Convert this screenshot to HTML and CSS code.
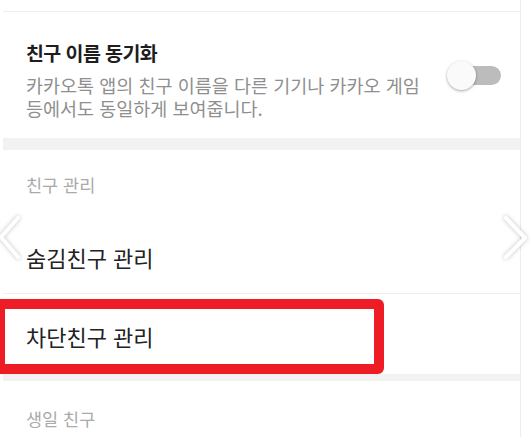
FILE: index.html
```html
<!DOCTYPE html>
<html lang="ko">
<head>
<meta charset="utf-8">
<link rel="stylesheet" href="styles.css">
</head>
<body>
<div class="page">
  <div class="top-gap"></div>
  <section class="sync">
    <div class="sync-text">
      <div class="title">친구 이름 동기화</div>
      <div class="desc">
        <div class="desc-line">카카오톡 앱의 친구 이름을 다른 기기나 카카오 게임</div>
        <div class="desc-line">등에서도 동일하게 보여줍니다.</div>
      </div>
    </div>
    <div class="toggle"><span class="knob"></span><span class="track"></span></div>
  </section>
  <div class="band"></div>
  <section class="group">
    <div class="group-head">친구 관리</div>
    <div class="item item-first">숨김친구 관리</div>
    <div class="item">차단친구 관리</div>
  </section>
  <div class="band band-thin"></div>
  <section class="group">
    <div class="group-head group-head-last">생일 친구</div>
  </section>
</div>
<div class="highlight"></div>
<svg class="nav nav-left" width="24" height="50" viewBox="0 0 24 50"><polyline points="19,3 2,22 19,42" /></svg>
<svg class="nav nav-right" width="30" height="50" viewBox="0 0 30 50"><polyline points="5,3 24,23 5,42" /></svg>
</body>
</html>
```

FILE: styles.css
```css
html, body {
  margin: 0;
  padding: 0;
  background: #ffffff;
  overflow: hidden;
}
body {
  font-family: "Noto Sans CJK KR", "Noto Sans", sans-serif;
  width: 531px;
  height: 437px;
}
.page {
  margin-left: 3px;
  width: 517px;
  height: 437px;
  border-right: 1px solid #ededed;
  background: #ffffff;
}
.top-gap {
  height: 11px;
  border-bottom: 1px solid #ededed;
}
.sync {
  display: flex;
  align-items: flex-start;
  padding: 28px 19px 18px 23px;
}
.sync-text {
  flex: 1;
  white-space: nowrap;
}
.title {
  font-size: 19.5px;
  letter-spacing: -0.6px;
  line-height: 26px;
  font-weight: 700;
  color: #1e1e1e;
  margin-bottom: 8px;
}
.desc {
  font-size: 18.5px;
  color: #8f8f8f;
}
.desc-line {
  height: 23px;
  line-height: 23px;
}
.toggle {
  display: flex;
  align-items: center;
  width: 54px;
  height: 30px;
  margin-top: 20px;
}
.knob {
  position: relative;
  z-index: 1;
  width: 29px;
  height: 29px;
  border-radius: 50%;
  background: #fafafa;
  box-shadow: 0 1px 3px rgba(0, 0, 0, 0.35);
  flex: none;
}
.track {
  width: 46px;
  height: 19px;
  margin-left: -21px;
  border-radius: 10px;
  background: #bcbcbc;
  flex: none;
}
.band {
  height: 12px;
  background: #f2f2f2;
}
.band-thin {
  height: 7px;
}
.group-head {
  padding: 24px 23px 18px;
  font-size: 17.5px;
  line-height: 22px;
  color: #aaaaaa;
}
.group-head-last {
  padding-top: 27px;
}
.item {
  height: 80px;
  line-height: 84px;
  padding-left: 23px;
  font-size: 22px;
  color: #222222;
}
.item-first {
  border-bottom: 1px solid #eeeeee;
  height: 79px;
  line-height: 86px;
}
.highlight {
  position: absolute;
  left: -5px;
  top: 299px;
  width: 369px;
  height: 55px;
  border: 10px solid #ee1c25;
  border-radius: 6px;
}
.nav {
  position: absolute;
  top: 215px;
  filter: drop-shadow(0 0 2px rgba(0, 0, 0, 0.25));
}
.nav polyline {
  fill: none;
  stroke: #ffffff;
  stroke-width: 4;
  stroke-linecap: round;
  stroke-linejoin: round;
}
.nav-left {
  left: -1px;
}
.nav-right {
  left: 501px;
}
```
